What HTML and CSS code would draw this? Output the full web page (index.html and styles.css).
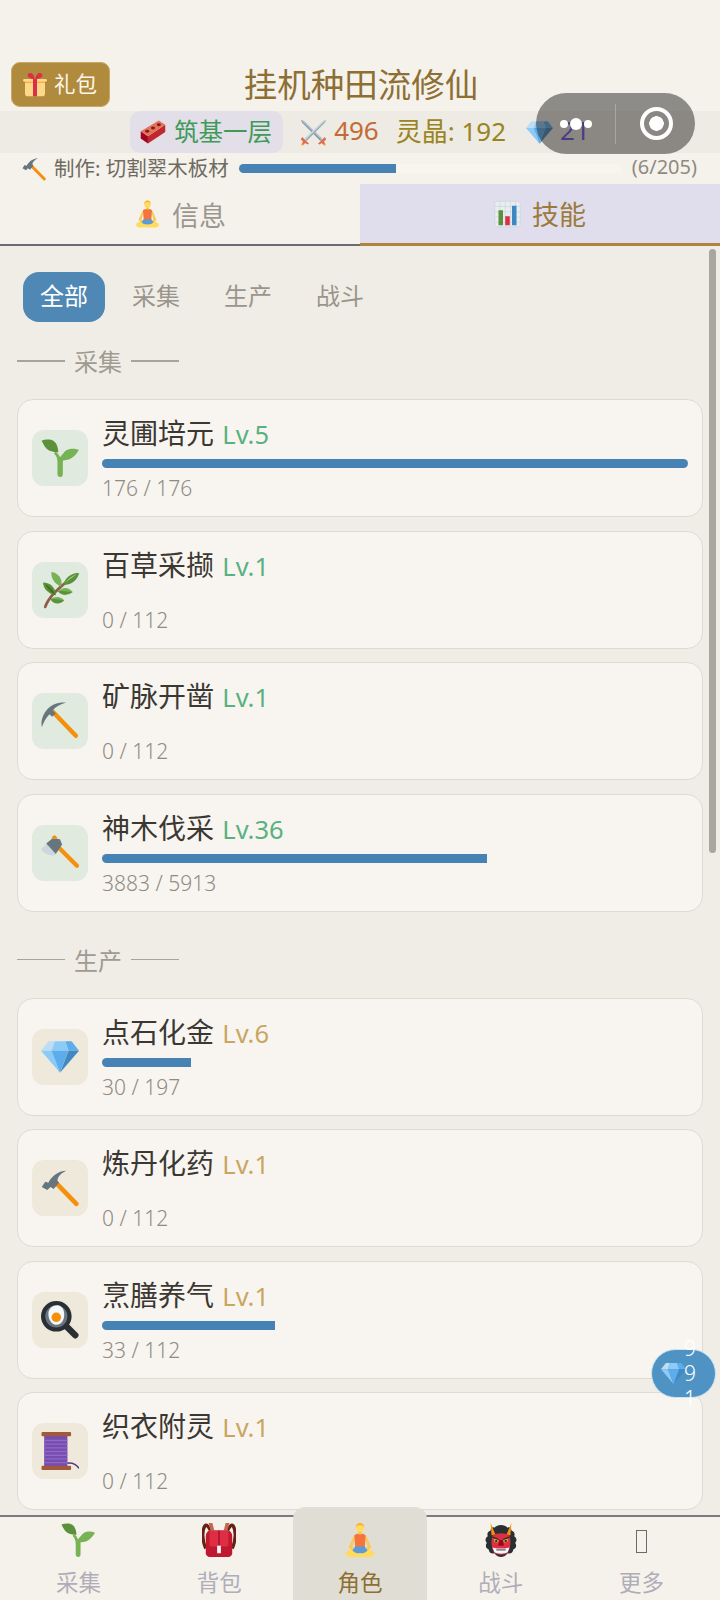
FILE: index.html
```html
<!DOCTYPE html>
<html lang="zh">
<head>
<meta charset="utf-8">
<title>挂机种田流修仙</title>
<link rel="stylesheet" href="styles.css">
</head>
<body>
<svg class="defs" width="0" height="0" aria-hidden="true">
  <symbol id="i-seed" viewBox="0 0 36 36">
    <path fill="#77B255" d="M18.200 36c-1.500 0-2.600-1-2.600-2.300V22c0-3.200-.9-6-3.400-8.400l1.800-1.600c1.900 1.500 3.200 3.300 4.100 5.400 1-1.900 2.500-3.600 4.600-4.700l1.200 1.900c-2.700 1.900-3.200 4.700-3.200 8v10.700c0 1.500-1 2.700-2.500 2.700z"/>
    <path fill="#5C913B" d="M.5 1.500C4 .2 9-.2 12 1.800c3 2 4.200 6.200 4.400 10.700-4.200.2-8.700-.9-11.300-3.500C3.200 7 1.800 4.100.5 1.500z"/>
    <path fill="#77B255" d="M36 10.300c-3.800-1.600-9.200-1.700-12.400.6-2.700 2-3.900 5.600-4.100 9.300 4 .4 8.300-.7 11.200-3.300 2.200-1.900 4-4.200 5.300-6.600z"/>
  </symbol>
  <symbol id="i-herb" viewBox="0 0 36 36">
    <path fill="none" stroke="#8D5B4A" stroke-width="2.600" stroke-linecap="round" d="M4 34C7 25 16 16 30 6"/>
    <path fill="#5C913B" d="M21 13C23 6 30 1 36 2c-1 6-7 12-15 11z"/>
    <path fill="#A6D388" d="M23 11c3-4 7-7 11-8-3 2-7 5-11 8z"/>
    <path fill="#77B255" d="M19 15C13 12 9 7 10 1c6 1 11 6 9 14z"/>
    <path fill="#5C913B" d="M14 23C7 22 2 17 2 11c7 0 12 5 12 12z"/>
    <path fill="#3E721D" d="M14 23C9 20 5 15 4 12c4 3 8 6 10 11z"/>
    <path fill="#77B255" d="M16 19c5-4 10-4 14 1-5 4-11 4-14-1z"/>
    <path fill="#5C913B" d="M16 19c5 0 9 .5 14 1-5 3-11 3-14-1z"/>
    <path fill="#5C913B" d="M9 27c4-3 9-3 13 1-4 4-10 4-13-1z"/>
    <path fill="#77B255" d="M9 27c4-1 9 0 13 1-4-4-9-4-13-1z"/>
  </symbol>
  <symbol id="i-pick" viewBox="0 0 36 36">
    <path fill="none" stroke="#F4900C" stroke-width="4.200" stroke-linecap="round" d="M11 9l22 23"/>
    <path fill="#67757F" d="M.7 24C-1 12 8-1 24 .5c-6 1.500-10 4-13 7.500l3 3-3.500 3-2.500-2.500C4.500 15 2.500 19 .7 24z"/>
  </symbol>
  <symbol id="i-axe" viewBox="0 0 36 36">
    <path fill="none" stroke="#F4900C" stroke-width="4" stroke-linecap="round" d="M13 9l21 21"/>
    <path fill="#CCD6DD" d="M0 14.500L6 9l8 11C9 21 3 19 0 14.500z"/>
    <path fill="#67757F" d="M5 9l6-5 7 1 2 5-6 9z"/>
    <path fill="#F4900C" d="M10 3l3-2 3 3-4 1z"/>
  </symbol>
  <symbol id="i-gem" viewBox="0 0 36 36">
    <path fill="#BDDDF4" d="M13 3H7l-7 9h10z"/>
    <path fill="#5DADEC" d="M36 12l-7-9h-6l3 9z"/>
    <path fill="#4289C1" d="M26 12h10L18 33z"/>
    <path fill="#8CCAF7" d="M10 12H0l18 21zm3-9l-3 9h16l-3-9z"/>
    <path fill="#5DADEC" d="M18 33l-8-21h16z"/>
  </symbol>
  <symbol id="i-hammer" viewBox="0 0 36 36">
    <path fill="none" stroke="#F4900C" stroke-width="4.400" stroke-linecap="round" d="M14 13l19.500 20"/>
    <path fill="#67757F" d="M.7 17L4 12l3 1C10 7 16 2 24 1.700c-5 2.300-8 5.300-8.500 9.300l1.500 2-5 6-3-2-3 3z"/>
  </symbol>
  <symbol id="i-pan" viewBox="0 0 36 36">
    <path fill="none" stroke="#292F33" stroke-width="6" stroke-linecap="round" d="M23 23l9.500 9.500"/>
    <circle cx="14.500" cy="14.500" r="12.500" fill="#66757F" stroke="#292F33" stroke-width="4"/>
    <path fill="#F5F8FA" d="M7 12c0-5 4-8 8.500-8 4.500.6 6.500 4 6.500 9 0 5-3 10-8 9.500C9.500 22 7 17 7 12z"/>
    <circle cx="14.500" cy="15.500" r="4.500" fill="#F4900C"/>
  </symbol>
  <symbol id="i-spool" viewBox="0 0 36 36">
    <rect x="3" y="3" width="22" height="30" fill="#744EAA"/>
    <path stroke="#9266CC" stroke-width="1.300" d="M3 8h22M3 11.500h22M3 15h22M3 18.500h22M3 22h22M3 25.500h22M3 29h22"/>
    <rect x=".5" y="0" width="28" height="4" rx="1" fill="#A0583F"/>
    <rect x=".5" y="32" width="28" height="4" rx="1" fill="#A0583F"/>
    <path fill="none" stroke="#553788" stroke-width="1.500" d="M25 29.500c4-.5 8 .5 11 5"/>
  </symbol>
  <symbol id="i-gift" viewBox="0 0 36 36">
    <path fill="#FDD888" d="M33 31c0 2.200-1.800 4-4 4H7c-2.200 0-4-1.800-4-4V14c0-2.200 1.800-4 4-4h22c2.200 0 4 1.800 4 4z"/>
    <path fill="#FDD888" d="M36 11c0 1.100-.9 2-2 2H2c-1.100 0-2-.9-2-2s.9-2 2-2h32c1.100 0 2 .9 2 2z"/>
    <path fill="#FCAB40" d="M3 13h30v2H3z"/>
    <path fill="#DA2F47" d="M15 9h6v26h-6z"/>
    <path fill="#DA2F47" d="M19 9c-1-3 2-8 5-9 3-.6 5 1 5 3 .2 3-4 6-10 6zm-2 0c1-3-2-8-5-9-3-.6-5 1-5 3-.2 3 4 6 10 6z"/>
  </symbol>
  <symbol id="i-brick" viewBox="0 0 36 36">
    <path fill="#A0041E" d="M1 17l10 7v10L1 27z"/>
    <path fill="#C1272D" d="M11 24l24-16v10L11 34z"/>
    <path fill="#E0755F" d="M1 17L26 2l9 6-24 16z"/>
    <ellipse cx="10" cy="17" rx="2.800" ry="2" fill="#8B1A14"/>
    <ellipse cx="18" cy="12.500" rx="2.800" ry="2" fill="#8B1A14"/>
    <ellipse cx="26" cy="8" rx="2.800" ry="2" fill="#8B1A14"/>
  </symbol>
  <symbol id="i-swords" viewBox="0 0 36 36">
    <path fill="#B8C4CC" d="M1 1l4 1 25 24-3 3L3 5z"/>
    <path fill="#8899A6" d="M1 1l28 27-2 1L3 5z"/>
    <path fill="#CCD6DD" d="M35 1l-4 1L6 26l3 3L33 5z"/>
    <path fill="#9AAAB4" d="M35 1L7 28l2 1L33 5z"/>
    <path fill="#DD6B4D" d="M3 24l9 9-2 1-3-2-3 3-2-1 2-4-3-3z"/>
    <path fill="#DD6B4D" d="M33 24l-9 9 2 1 3-2 3 3 2-1-2-4 3-3z"/>
    <circle cx="3" cy="34" r="1.500" fill="#FFAC33"/>
    <circle cx="33" cy="34" r="1.500" fill="#FFAC33"/>
  </symbol>
  <symbol id="i-person" viewBox="0 0 36 36">
    <path fill="#FFDC5D" d="M18 26c-4 0-12 2-15 5-1 2 1 5 5 5h20c4 0 6-3 5-5-3-3-11-5-15-5z"/>
    <path fill="#F9CA55" d="M6 26l5-12 2 1-3 10 3 3-2 2zM30 26l-5-12-2 1 3 10-3 3 2 2z"/>
    <path fill="#F4743B" d="M12 13c1-1 3-2 6-2s5 1 6 2l-1 14H13z"/>
    <path fill="#5C9BD6" d="M13 25h10l3 4c-2 2-4 3-8 3s-6-1-8-3z"/>
    <rect x="16" y="8" width="4" height="4" fill="#F7C64B"/>
    <ellipse cx="18" cy="5" rx="4.200" ry="5" fill="#FFDC5D"/>
    <path fill="#FFAC33" d="M13.500 5c0-3 2-5 4.500-5s4.500 2 4.500 5c-1-2-2-3-4.500-3s-3.500 1-4.500 3z"/>
  </symbol>
  <symbol id="i-chart" viewBox="0 0 36 36">
    <rect x="1" y="1" width="34" height="34" rx="3" fill="#E8EDF2" stroke="#CCD6DD" stroke-width="1"/>
    <path stroke="#CCD6DD" stroke-width="1" d="M1 8h34M1 15h34M1 22h34M1 29h34M8 1v34M15 1v34M22 1v34M29 1v34"/>
    <rect x="6" y="13" width="6" height="20" fill="#5C913B"/>
    <rect x="15" y="21" width="6" height="12" fill="#DD2E44"/>
    <rect x="24" y="7" width="6" height="26" fill="#3B88C3"/>
  </symbol>
  <symbol id="i-bag" viewBox="0 0 36 36">
    <path fill="none" stroke="#662113" stroke-width="3.400" d="M4 27C0 18 0 8 3 3c2-2 4 1 6 5M32 27c4-9 4-19 1-24-2-2-4 1-6 5"/>
    <path fill="#C1694F" d="M7 0h4l2 8H9zM29 0h-4l-2 8h4z"/>
    <path fill="#BE1931" d="M4 14c0-3 2-6 5-6h18c3 0 5 3 5 6v18c0 2-2 4-4 4H8c-2 0-4-2-4-4z"/>
    <path fill="#DD2E44" d="M8 8h20v15c0 1-1 2-2 2H10c-1 0-2-1-2-2z"/>
    <path fill="#A0041E" d="M17 8h2v17h-2z" opacity=".6"/>
    <rect x="16" y="24" width="4" height="8" fill="#F5F8FA"/>
  </symbol>
  <symbol id="i-ogre" viewBox="0 0 36 36">
    <path fill="#292F33" d="M18 2c3 0 5 1 7 3 2-1 4 0 4 3 3 1 4 3 3 6 3 2 3 5 1 7 2 3 1 6-2 7 0 3-3 5-6 4-2 3-5 4-7 4s-5-1-7-4c-3 1-6-1-6-4-3-1-4-4-2-7-2-2-2-5 1-7-1-3 0-5 3-6 0-3 2-4 4-3 2-2 4-3 7-3z"/>
    <path fill="#DD2E44" d="M9 13c3-3 15-3 18 0 2 7 1 14-2 19-3 2-11 2-14 0-3-5-4-12-2-19z"/>
    <path fill="#F4900C" d="M7 0l5 12-4 1zM29 0l-5 12 4 1z"/>
    <path fill="#C9A227" d="M10 16l6 2-1 3-4-1zM26 16l-6 2 1 3 4-1z"/>
    <path fill="#292F33" d="M9 14l7 3v1l-7-2zM27 14l-7 3v1l7-2zM12 18h2v2h-2zM22 18h2v2h-2z"/>
    <path fill="#A0041E" d="M16 18h4l1 6h-6z"/>
    <path fill="#F5F8FA" d="M9 26l5 1h8l5-1-2 5c-3 2-11 2-14 0z"/>
    <path fill="#292F33" d="M13 28h10v1H13z"/>
  </symbol>
</svg>

<div class="app">
  <header class="head">
    <div class="title-row">
      <button class="gift"><svg class="ic-gift"><use href="#i-gift"/></svg><span>礼包</span></button>
      <h1 class="title">挂机种田流修仙</h1>
      <span class="title-end"></span>
    </div>
    <div class="stats">
      <span class="realm"><svg class="ic-brick"><use href="#i-brick"/></svg><span class="up">筑基一层</span></span>
      <span class="stat power"><svg class="ic-swords"><use href="#i-swords"/></svg><span class="up">496</span></span>
      <span class="stat crystal"><span class="up">灵晶: 192</span></span>
      <span class="stat gems"><svg class="ic-gem-sm"><use href="#i-gem"/></svg><span class="up">21</span></span>
    </div>
    <div class="craft">
      <svg class="ic-craft"><use href="#i-hammer"/></svg>
      <span class="craft-text">制作: 切割翠木板材</span>
      <span class="craft-bar"><span class="craft-fill" style="width:41%"></span></span>
      <span class="craft-count">(6/205)</span>
    </div>
    <div class="tabs">
      <div class="tab"><svg class="ic-tab"><use href="#i-person"/></svg>信息</div>
      <div class="tab tab-on"><svg class="ic-tab"><use href="#i-chart"/></svg>技能</div>
    </div>
  </header>

  <main class="main">
    <div class="filters">
      <span class="filter filter-on">全部</span>
      <span class="filter">采集</span>
      <span class="filter">生产</span>
      <span class="filter">战斗</span>
    </div>

    <h2 class="section">采集</h2>
    <section class="cards">
      <article class="card">
        <div class="icon icon-g"><svg class="ic"><use href="#i-seed"/></svg></div>
        <div class="body">
          <div class="name">灵圃培元 <span class="lv lv-g">Lv.5</span></div>
          <div class="bar"><div class="fill" style="width:100%"></div></div>
          <div class="sub">176 / 176</div>
        </div>
      </article>
      <article class="card">
        <div class="icon icon-g"><svg class="ic"><use href="#i-herb"/></svg></div>
        <div class="body">
          <div class="name">百草采撷 <span class="lv lv-g">Lv.1</span></div>
          <div class="bar"></div>
          <div class="sub">0 / 112</div>
        </div>
      </article>
      <article class="card">
        <div class="icon icon-g"><svg class="ic"><use href="#i-pick"/></svg></div>
        <div class="body">
          <div class="name">矿脉开凿 <span class="lv lv-g">Lv.1</span></div>
          <div class="bar"></div>
          <div class="sub">0 / 112</div>
        </div>
      </article>
      <article class="card">
        <div class="icon icon-g"><svg class="ic"><use href="#i-axe"/></svg></div>
        <div class="body">
          <div class="name">神木伐采 <span class="lv lv-g">Lv.36</span></div>
          <div class="bar"><div class="fill" style="width:65.7%"></div></div>
          <div class="sub">3883 / 5913</div>
        </div>
      </article>
    </section>

    <h2 class="section">生产</h2>
    <section class="cards">
      <article class="card">
        <div class="icon icon-t"><svg class="ic"><use href="#i-gem"/></svg></div>
        <div class="body">
          <div class="name">点石化金 <span class="lv lv-t">Lv.6</span></div>
          <div class="bar"><div class="fill" style="width:15.2%"></div></div>
          <div class="sub">30 / 197</div>
        </div>
      </article>
      <article class="card">
        <div class="icon icon-t"><svg class="ic"><use href="#i-hammer"/></svg></div>
        <div class="body">
          <div class="name">炼丹化药 <span class="lv lv-t">Lv.1</span></div>
          <div class="bar"></div>
          <div class="sub">0 / 112</div>
        </div>
      </article>
      <article class="card">
        <div class="icon icon-t"><svg class="ic"><use href="#i-pan"/></svg></div>
        <div class="body">
          <div class="name">烹膳养气 <span class="lv lv-t">Lv.1</span></div>
          <div class="bar"><div class="fill" style="width:29.5%"></div></div>
          <div class="sub">33 / 112</div>
        </div>
      </article>
      <article class="card">
        <div class="icon icon-t"><svg class="ic"><use href="#i-spool"/></svg></div>
        <div class="body">
          <div class="name">织衣附灵 <span class="lv lv-t">Lv.1</span></div>
          <div class="bar"></div>
          <div class="sub">0 / 112</div>
        </div>
      </article>
    </section>
    <div class="scrollbar"></div>
  </main>

  <nav class="nav">
    <div class="nav-item"><svg class="ic-nav"><use href="#i-seed"/></svg><span>采集</span></div>
    <div class="nav-item"><svg class="ic-nav"><use href="#i-bag"/></svg><span>背包</span></div>
    <div class="nav-item nav-on"><svg class="ic-nav"><use href="#i-person"/></svg><span>角色</span></div>
    <div class="nav-item"><svg class="ic-nav"><use href="#i-ogre"/></svg><span>战斗</span></div>
    <div class="nav-item"><span class="tofu"></span><span>更多</span></div>
  </nav>

  <div class="float">
    <svg class="ic-float"><use href="#i-gem"/></svg>
    <span class="ticker"><span>9</span><span>9</span><span>1</span></span>
  </div>

  <div class="capsule">
    <span class="dots"><i></i><i class="big"></i><i></i></span>
    <span class="cap-line"></span>
    <span class="target"></span>
  </div>
</div>
</body>
</html>
```

FILE: styles.css
```css
* { box-sizing: border-box; }
html, body { margin: 0; padding: 0; }
body {
  width: 720px;
  height: 1600px;
  overflow: hidden;
  background: #f5f2ec;
  font-family: "Noto Sans", "Noto Sans CJK SC", sans-serif;
  font-variant-numeric: proportional-nums;
}
.defs { position: absolute; }
.app {
  position: relative;
  width: 720px;
  height: 1600px;
  display: flex;
  flex-direction: column;
  overflow: hidden;
}

/* header */
.head { padding-top: 62px; background: #f5f2ec; flex: none; }
.title-row {
  height: 49px;
  display: grid;
  grid-template-columns: 1fr auto 1fr;
  align-items: start;
  padding: 0 10px 0 12px;
}
.gift {
  width: 99px;
  height: 45px;
  margin-left: -1px;
  display: flex;
  align-items: center;
  gap: 7px;
  padding: 0 0 4px 11px;
  border: 1px solid #c9a961;
  border-radius: 9px;
  background: #b08b3d;
  color: #fbf6ea;
  font: 400 21.500px "Noto Sans CJK SC", sans-serif;
  justify-self: start;
}
.ic-gift { width: 24px; height: 26px; margin-top: 4px; }
.title {
  margin: 0;
  font: 400 33.500px/42px "Noto Sans CJK SC", sans-serif;
  color: #8e6f33;
}
.stats {
  height: 42px;
  display: flex;
  align-items: center;
  justify-content: center;
  gap: 17px;
  background: #eeebe4;
  font: 400 26px "Noto Sans", "Noto Sans CJK SC", sans-serif;
}
.up { padding-bottom: 4px; }
.realm {
  height: 42px;
  display: flex;
  align-items: center;
  gap: 8px;
  padding: 0 11px 0 10px;
  border-radius: 10px;
  background: #e2dfe9;
  color: #3f9a5a;
  font-size: 24.500px;
}
.ic-brick { width: 26px; height: 26px; }
.stat { display: flex; align-items: center; gap: 7px; }
.power { color: #c46a35; }
.crystal { color: #9a8420; }
.gems { color: #6a55e0; margin-left: 3px; }
.ic-swords { width: 27px; height: 27px; }
.ic-gem-sm { width: 27px; height: 27px; }
.craft {
  height: 31px;
  display: flex;
  align-items: center;
  padding: 0 23px 4px 22px;
  font: 400 20.500px "Noto Sans", "Noto Sans CJK SC", sans-serif;
  color: #6f6a60;
}
.ic-craft { width: 24px; height: 24px; flex: none; margin: 4px 8px 0 0; }
.craft-text { flex: none; margin-right: 10px; }
.craft-bar {
  flex: 1;
  height: 9px;
  margin: 4px 10px 0 0;
  border-radius: 5px;
  overflow: hidden;
  background: #f8f5ef;
}
.craft-fill { display: block; height: 100%; background: #4682b4; }
.craft-count { flex: none; font-size: 20px; color: #8f8a80; }
.tabs { display: flex; height: 62px; }
.tab {
  flex: 1;
  display: flex;
  align-items: center;
  justify-content: center;
  gap: 11px;
  border-bottom: 2.500px solid #6d6973;
  font: 400 27px "Noto Sans CJK SC", sans-serif;
  color: #9a9690;
}
.tab-on {
  background: #e0ddec;
  color: #9b7a3e;
  border-bottom: 3px solid #b0843f;
}
.ic-tab { width: 27px; height: 30px; }

/* main */
.main {
  position: relative;
  flex: 1;
  min-height: 0;
  overflow: hidden;
  padding: 26px 17px 0;
  background: #f0ede7;
}
.filters { display: flex; gap: 10px; padding-left: 6px; margin-bottom: 22px; }
.filter {
  height: 50px;
  padding: 0 17px;
  border-radius: 16px;
  font: 400 24px/46px "Noto Sans CJK SC", sans-serif;
  color: #9a958c;
}
.filter-on { background: #4f87b5; color: #fff; }
.section {
  display: flex;
  align-items: center;
  gap: 9px;
  margin: 0 0 21px;
  height: 34px;
  font: 400 24px/30px "Noto Sans CJK SC", sans-serif;
  color: #a09b91;
}
.section::before,
.section::after {
  content: "";
  width: 48px;
  height: 1.500px;
  background: #a9a49a;
}
.cards {
  display: flex;
  flex-direction: column;
  gap: 13.500px;
  margin-bottom: 31px;
}
.card {
  height: 118px;
  display: flex;
  gap: 14px;
  padding: 13px 14px 0;
  border: 1.500px solid #dedbd2;
  border-radius: 16px;
  background: #f8f5f0;
}
.icon {
  width: 56px;
  height: 56px;
  flex: none;
  margin-top: 17px;
  display: flex;
  align-items: center;
  justify-content: center;
  border-radius: 12px;
}
.icon-g { background: #e0eadf; }
.icon-t { background: #efe9dc; }
.ic { width: 38px; height: 38px; }
.body { flex: 1; min-width: 0; }
.name {
  height: 38px;
  font: 400 28px/38px "Noto Sans CJK SC", sans-serif;
  color: #3b3833;
}
.lv { margin-left: 2px; font: 400 25.500px/38px "Noto Sans", sans-serif; }
.lv-g { color: #58b180; }
.lv-t { color: #c8a660; }
.bar {
  height: 9px;
  margin-top: 8px;
  border-radius: 5px;
  overflow: hidden;
  background: #f8f5f0;
}
.fill { height: 100%; background: #4682b4; }
.sub {
  height: 32px;
  margin-top: 4px;
  font: 300 21px/32px "Noto Sans", sans-serif;
  color: #8f8b84;
}
.scrollbar {
  position: absolute;
  top: 3px;
  right: 4px;
  width: 7px;
  height: 604px;
  border-radius: 4px;
  background: #a9a6a0;
}

/* nav */
.nav {
  position: relative;
  flex: none;
  height: 85px;
  display: flex;
  padding: 0 8px;
  background: #f5f2ec;
  border-top: 2px solid #7d7980;
}
.nav-item {
  flex: 0 0 140.800px;
  display: flex;
  flex-direction: column;
  align-items: center;
  padding-top: 6px;
  font: 400 22.500px/30px "Noto Sans CJK SC", sans-serif;
  color: #b0adb8;
}
.ic-nav { width: 34px; height: 34px; flex: none; margin-bottom: 9px; }
.nav-on {
  flex: 0 0 134px;
  margin: -10px 3.400px 0;
  padding-top: 16px;
  border-radius: 12px 12px 0 0;
  background: #e0ddd4;
  color: #8e6f33;
}
.tofu {
  width: 11px;
  height: 23px;
  margin: 7px 0 13px;
  border: 1.500px solid #6f6a65;
  flex: none;
}

/* overlays */
.float {
  position: absolute;
  left: 651px;
  top: 1349px;
  width: 65px;
  height: 49px;
  display: flex;
  align-items: center;
  padding-left: 9px;
  border: 1px solid #cfe4f2;
  border-radius: 25px;
  background: #4f93c4;
}
.ic-float { width: 25px; height: 25px; flex: none; }
.ticker {
  display: flex;
  flex-direction: column;
  align-items: center;
  height: 20px;
  justify-content: center;
  font: 300 21px/25px "Noto Sans", sans-serif;
  color: #fff;
  margin-left: -2px;
}
.capsule {
  position: absolute;
  left: 536px;
  top: 93px;
  width: 159px;
  height: 61px;
  display: flex;
  align-items: center;
  border-radius: 31px;
  background: rgba(40, 38, 35, .5);
}
.dots {
  width: 79px;
  display: flex;
  align-items: center;
  justify-content: center;
  gap: 2px;
}
.dots i { width: 8px; height: 8px; border-radius: 50%; background: #fff; }
.dots i.big { width: 12px; height: 12px; }
.cap-line { width: 1px; height: 40px; background: rgba(255, 255, 255, .25); }
.target {
  width: 33px;
  height: 33px;
  margin-left: 24px;
  border-radius: 50%;
  border: 4px solid #fff;
  display: flex;
  align-items: center;
  justify-content: center;
  background: radial-gradient(circle, #fff 0 7px, transparent 7.500px);
}
```
